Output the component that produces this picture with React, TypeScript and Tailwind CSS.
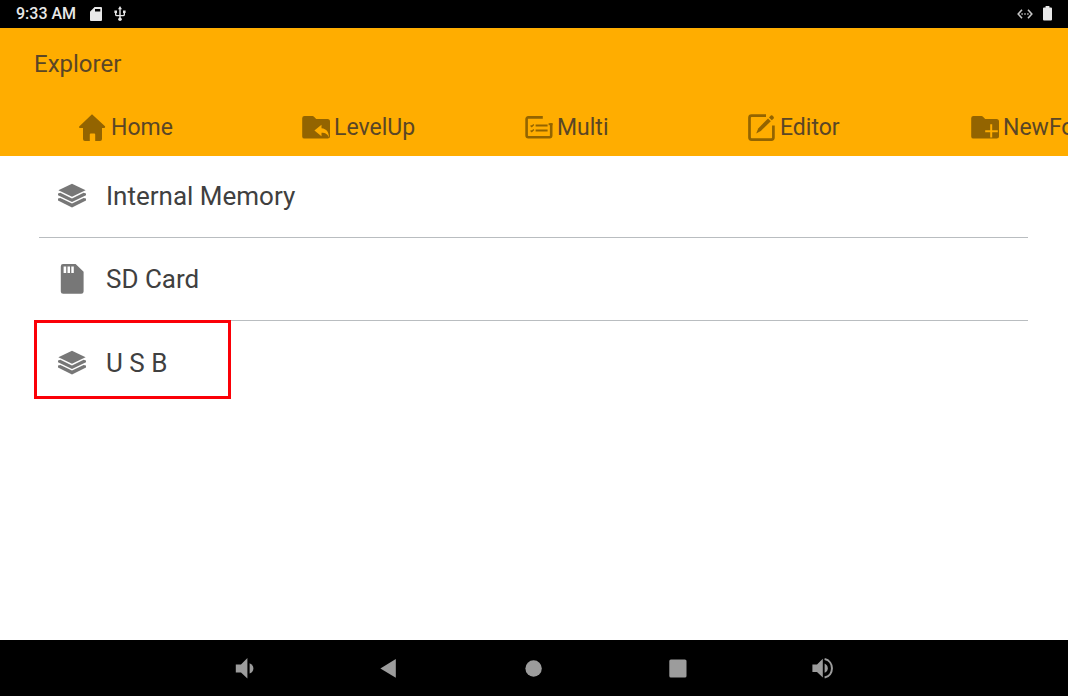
import type { ReactNode } from "react";

function HomeIcon() {
  return (
    <svg viewBox="0 0 28 28" className="size-7 shrink-0" fill="currentColor" aria-hidden="true">
      <path d="M13 0.2 L26 12.2 Q26.6 14 25 14 H23 V25 Q23 27 21 27 H16.2 V20.5 Q16.2 19.6 15.3 19.6 H11.7 Q10.8 19.6 10.8 20.5 V27 H6 Q4 27 4 25 V14 H1 Q-0.4 14 0.2 12.4 Z" />
    </svg>
  );
}

function LevelUpIcon() {
  return (
    <svg viewBox="0 0 28 28" className="size-7 shrink-0" fill="currentColor" aria-hidden="true">
      <path
        fillRule="evenodd"
        d="M2.5 2 H10.5 Q11.4 2 12 2.7 L14.2 5 H25.5 Q28 5 28 7.5 V22.5 Q28 24.6 25.8 24.6 H2.4 Q0.2 24.6 0.2 22.4 V4.2 Q0.2 2 2.5 2 Z M19.5 10.8 L12.4 16.4 L19.5 22.3 V18.8 C23.5 18.8 25.6 20.2 26.9 23.6 C27 18.2 24.6 14.6 19.5 14.2 Z"
      />
    </svg>
  );
}

function MultiIcon() {
  return (
    <svg viewBox="0 0 28 28" className="size-7 shrink-0" fill="none" stroke="currentColor" aria-hidden="true">
      <path strokeWidth="2.6" d="M17.8 3.4 H3.3 Q1.6 3.4 1.6 5.1 V21.6 Q1.6 23.2 3.3 23.2 H24.6 Q26.2 23.2 26.2 21.6 V9.2" />
      <path strokeWidth="2" d="M27.5 10.2 H23.6" />
      <path strokeWidth="2" d="M10.6 11.6 H22.6 M10.6 16.6 H22.6" />
      <path strokeWidth="1.4" d="M5.6 11.4 L6.8 12.6 L8.8 10.6 M5.6 16.4 L6.8 17.6 L8.8 15.6" />
    </svg>
  );
}

function EditorIcon() {
  return (
    <svg viewBox="0 0 28 28" className="size-7 shrink-0" fill="none" stroke="currentColor" aria-hidden="true">
      <path strokeWidth="2.7" d="M18 1.6 H3.6 Q1.5 1.6 1.5 3.7 V23.6 Q1.5 25.6 3.6 25.6 H23.4 Q25.4 25.6 25.4 23.6 V11.5" />
      <g fill="currentColor" stroke="none">
        <path d="M20 4.4 L22.8 7.2 L12.8 17 L8.2 19.4 L10.2 14.4 Z" />
        <path d="M21 3.4 L22.8 1.6 Q23.6 0.9 24.4 1.6 L25.6 2.8 Q26.3 3.6 25.6 4.4 L23.8 6.2 Z" />
      </g>
    </svg>
  );
}

function NewFolderIcon() {
  return (
    <svg viewBox="0 0 28 28" className="size-7 shrink-0" fill="currentColor" aria-hidden="true">
      <path
        fillRule="evenodd"
        d="M2.5 2 H10.5 Q11.4 2 12 2.7 L14.2 5 H25.5 Q28 5 28 7.5 V22.5 Q28 24.6 25.8 24.6 H2.4 Q0.2 24.6 0.2 22.4 V4.2 Q0.2 2 2.5 2 Z M19.2 10.2 V16.2 H14.2 V18.2 H19.2 V23.4 H21.2 V18.2 H26.8 V16.2 H21.2 V10.2 Z"
      />
    </svg>
  );
}

function LayersIcon() {
  return (
    <svg viewBox="0 0 30 30" className="size-[30px] shrink-0" fill="currentColor" aria-hidden="true">
      <path d="M15 2.8 L28.6 9.2 L15 15.8 L1.4 9.2 Z" />
      <path d="M1 12.4 L3.4 11.8 L15 17.4 L26.6 11.8 L29 12.4 V14.2 L15 21 L1 14.2 Z" />
      <path d="M1 17.6 L3.4 17 L15 22.6 L26.6 17 L29 17.6 V19.6 L15 26.4 L1 19.6 Z" />
    </svg>
  );
}

function SdCardIcon() {
  return (
    <svg viewBox="0 0 30 30" className="size-[30px] shrink-0" fill="currentColor" aria-hidden="true">
      <path
        fillRule="evenodd"
        d="M6 0 H18.6 L26.6 7.8 V27.4 Q26.6 29.8 24.2 29.8 H6.2 Q3.8 29.8 3.8 27.4 V2.4 Q3.8 0 6 0 Z M6.6 2.6 V9 H9.2 V2.6 Z M10.5 2.6 V9 H13 V2.6 Z M14.3 2.6 V9 H16.8 V2.6 Z"
      />
    </svg>
  );
}

const actions: { label: string; icon: ReactNode }[] = [
  { label: "Home", icon: <HomeIcon /> },
  { label: "LevelUp", icon: <LevelUpIcon /> },
  { label: "Multi", icon: <MultiIcon /> },
  { label: "Editor", icon: <EditorIcon /> },
  { label: "NewFolder", icon: <NewFolderIcon /> },
];

const navButtons: { label: string; shape: ReactNode }[] = [
  {
    label: "Volume down",
    shape: (
      <>
        <path d="M1.8 8.5 H7 L13.4 2 V22.5 L7 16.5 H1.8 Z" />
        <path d="M15.6 7.2 Q19.4 9 19.4 12.4 Q19.4 15.8 15.6 17.6 Z" />
      </>
    ),
  },
  { label: "Back", shape: <path d="M2.4 12.4 L17.8 3 V21.8 Z" /> },
  { label: "Home", shape: <circle cx="11.6" cy="12.5" r="8.2" /> },
  { label: "Recent apps", shape: <rect x="3.3" y="3.4" width="17.2" height="18.2" rx="1.6" /> },
  {
    label: "Volume up",
    shape: (
      <>
        <path d="M2.4 8.5 H7 L12.8 2.8 V21.6 L7 16 H2.4 Z" />
        <path d="M14.6 7.6 Q17.8 9.2 17.8 12.2 Q17.8 15.2 14.6 16.8 Z" />
        <path fill="none" stroke="currentColor" strokeWidth="2" d="M14.6 3 C24.4 5 24.4 19.6 14.6 21.6" />
      </>
    ),
  },
];

function StatusBar() {
  return (
    <div className="flex h-7 shrink-0 items-center bg-black px-4 text-[#e8e8e8]">
      <time className="text-base leading-7 font-medium">9:33 AM</time>
      <svg viewBox="0 0 12 14" className="ml-3.5 h-3.5 w-3" fill="currentColor" aria-label="SD card">
        <path
          fillRule="evenodd"
          d="M4.6 0 H11 Q12 0 12 1 V13 Q12 14 11 14 H1 Q0 14 0 13 V4.8 Z M5 2 V4.4 H10.3 V2 Z"
        />
      </svg>
      <svg viewBox="0 0 12 16" className="ml-3 h-4 w-3" fill="none" stroke="currentColor" strokeWidth="1.4" aria-label="USB">
        <path d="M6 2 V13 M1.7 6 V8.4 Q1.7 9.6 3 9.6 H9 Q10.3 9.6 10.3 8.4 V6" />
        <path fill="currentColor" stroke="none" d="M6 0 L8 3.2 H4 Z M0.4 4.4 H3 V7 H0.4 Z M9 4.4 H11.6 V7 H9 Z" />
        <circle cx="6" cy="13.2" r="1.8" fill="currentColor" stroke="none" />
      </svg>
      <svg viewBox="0 0 16 10" className="ml-auto h-2.5 w-4" fill="none" stroke="#c4c4c4" strokeWidth="1.6" aria-label="Ethernet">
        <path d="M5 0.8 L1.2 5 L5 9.2 M11 0.8 L14.8 5 L11 9.2" />
        <path d="M4.4 5 H5.8 M7.3 5 H8.7 M10.2 5 H11.6" />
      </svg>
      <svg viewBox="0 0 9 16" className="ml-2.5 h-4 w-[9px]" fill="currentColor" aria-label="Battery full">
        <path d="M2.6 0 H6.4 V1.4 H8 Q9 1.4 9 2.4 V13.6 Q9 14.6 8 14.6 H1 Q0 14.6 0 13.6 V2.4 Q0 1.4 1 1.4 H2.6 Z" />
      </svg>
    </div>
  );
}

function Volume({ icon, label, children }: { icon: ReactNode; label: string; children?: ReactNode }) {
  return (
    <li className="relative h-[83px] border-b border-[#b9bdc0] last:border-b-0">
      <button type="button" className="flex h-full w-full items-center gap-[19px] pl-[18px] text-left">
        <span className="text-[#777777]">{icon}</span>
        <span className="text-[26px] leading-8 text-[#404040]">{label}</span>
      </button>
      {children}
    </li>
  );
}

export default function App() {
  return (
    <div className="flex min-h-screen flex-col overflow-hidden bg-white font-['Roboto','Noto_Sans',sans-serif]">
      <StatusBar />
      <header className="bg-[#ffad00] text-[#5a4626]">
        <h1 className="pt-5 pl-[34px] text-2xl leading-8">Explorer</h1>
        <nav className="overflow-hidden pt-[26px] pb-1.5" aria-label="File actions">
          <ul className="flex pl-[79px]">
            {actions.map(({ label, icon }) => (
              <li key={label} className="w-[223px] shrink-0">
                <button type="button" className="flex h-11 items-center gap-1">
                  <span className="text-[#936400]">{icon}</span>
                  <span className="text-[23px] leading-8">{label}</span>
                </button>
              </li>
            ))}
          </ul>
        </nav>
      </header>
      <main className="-mt-px flex-1 pr-10 pl-[39px]">
        <ul>
          <Volume icon={<LayersIcon />} label="Internal Memory" />
          <Volume icon={<SdCardIcon />} label="SD Card" />
          <Volume icon={<LayersIcon />} label="U S B">
            <div className="pointer-events-none absolute -top-px -left-[5px] h-[79px] w-[197px] border-3 border-[#fb0007]" />
          </Volume>
        </ul>
      </main>
      <footer className="flex h-14 shrink-0 items-center justify-center bg-black text-[#9c9c9c]">
        {navButtons.map(({ label, shape }) => (
          <button key={label} type="button" aria-label={label} className="flex h-full w-36 items-center justify-center">
            <svg viewBox="0 0 24 24" className="size-6" fill="currentColor" aria-hidden="true">
              {shape}
            </svg>
          </button>
        ))}
      </footer>
    </div>
  );
}
